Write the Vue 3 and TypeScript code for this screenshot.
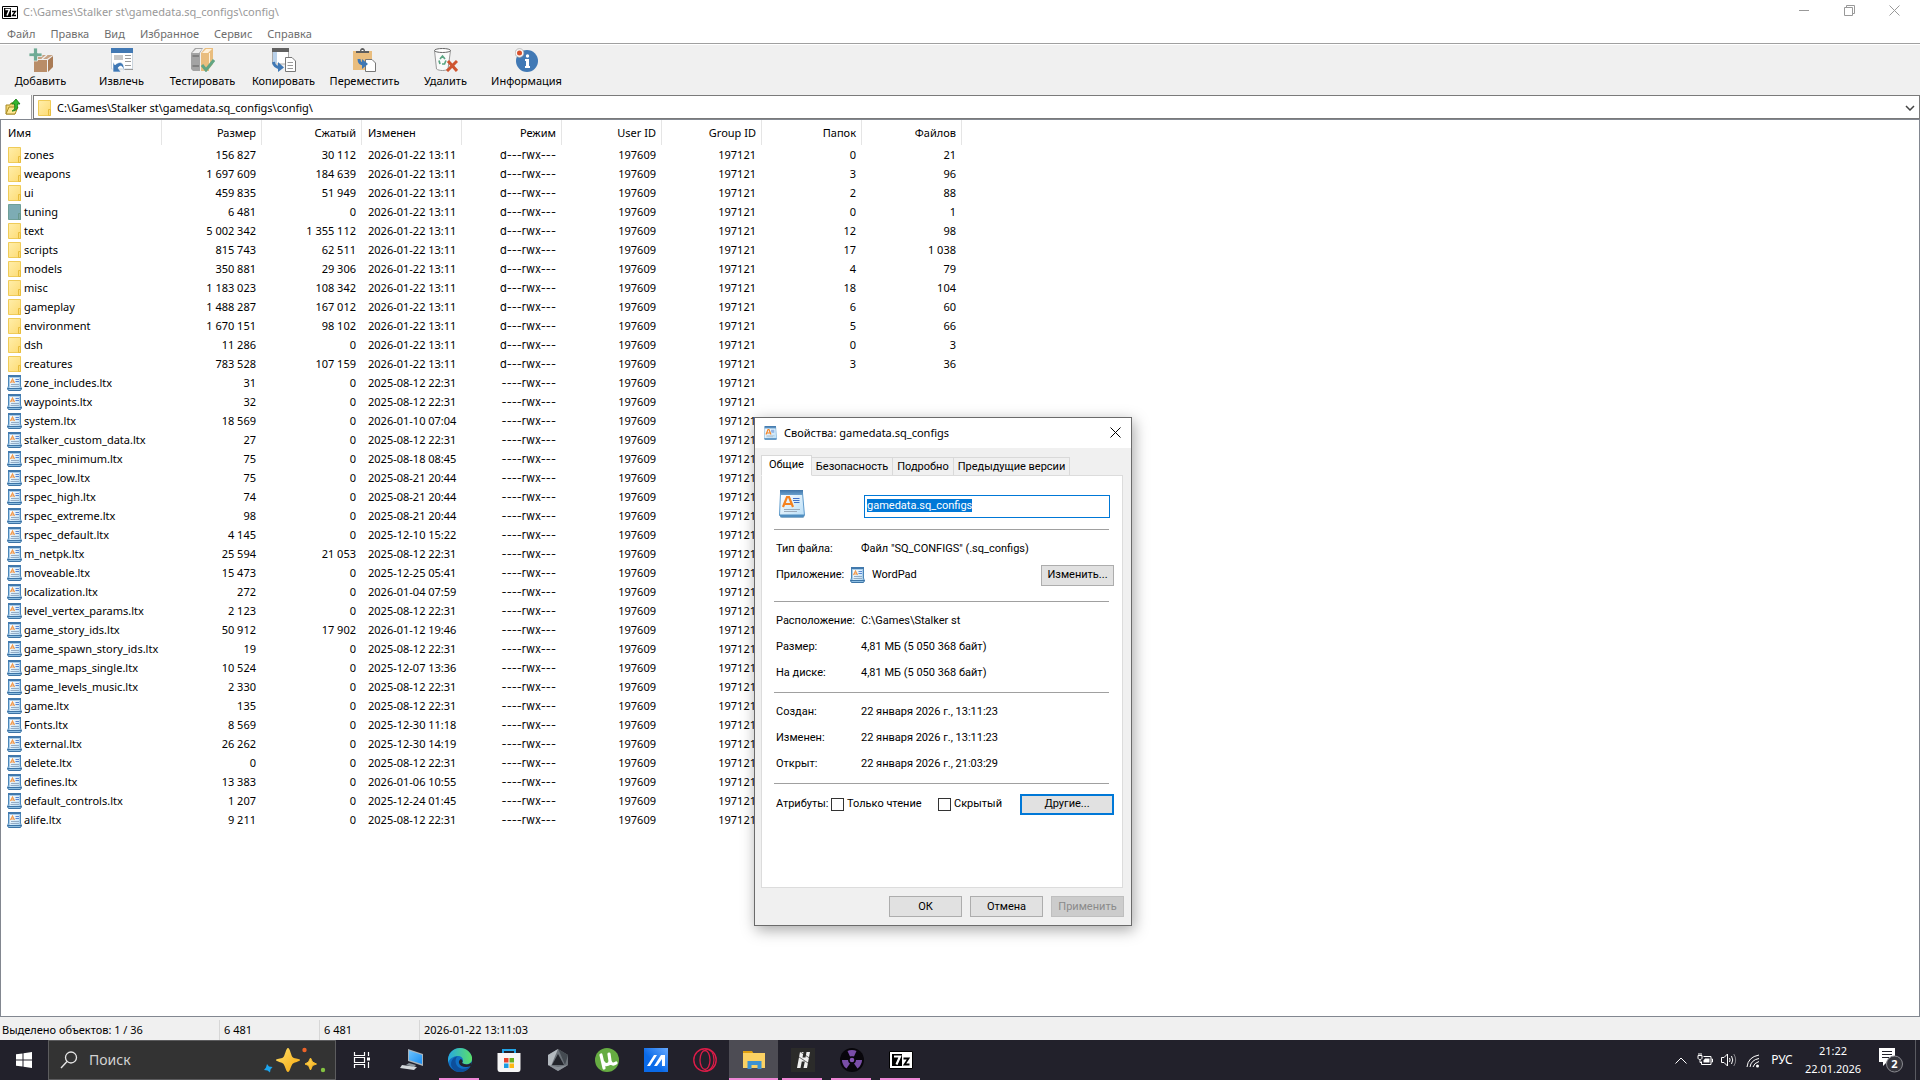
<script setup lang="ts">
import { onMounted, ref } from 'vue'

interface Entry {
  name: string
  size: string
  packed: string
  date: string
  folders?: string
  files?: string
}

const dir = (name: string, size: string, packed: string, folders: string, files: string): Entry => ({
  name, size, packed, folders, files, date: '2026-01-22 13:11',
})
const file = (name: string, size: string, date: string, packed = '0'): Entry => ({
  name: name + '.ltx', size, packed, date,
})

const entries: Entry[] = [
  dir('zones', '156 827', '30 112', '0', '21'),
  dir('weapons', '1 697 609', '184 639', '3', '96'),
  dir('ui', '459 835', '51 949', '2', '88'),
  dir('tuning', '6 481', '0', '0', '1'),
  dir('text', '5 002 342', '1 355 112', '12', '98'),
  dir('scripts', '815 743', '62 511', '17', '1 038'),
  dir('models', '350 881', '29 306', '4', '79'),
  dir('misc', '1 183 023', '108 342', '18', '104'),
  dir('gameplay', '1 488 287', '167 012', '6', '60'),
  dir('environment', '1 670 151', '98 102', '5', '66'),
  dir('dsh', '11 286', '0', '0', '3'),
  dir('creatures', '783 528', '107 159', '3', '36'),
  file('zone_includes', '31', '2025-08-12 22:31'),
  file('waypoints', '32', '2025-08-12 22:31'),
  file('system', '18 569', '2026-01-10 07:04'),
  file('stalker_custom_data', '27', '2025-08-12 22:31'),
  file('rspec_minimum', '75', '2025-08-18 08:45'),
  file('rspec_low', '75', '2025-08-21 20:44'),
  file('rspec_high', '74', '2025-08-21 20:44'),
  file('rspec_extreme', '98', '2025-08-21 20:44'),
  file('rspec_default', '4 145', '2025-12-10 15:22'),
  file('m_netpk', '25 594', '2025-08-12 22:31', '21 053'),
  file('moveable', '15 473', '2025-12-25 05:41'),
  file('localization', '272', '2026-01-04 07:59'),
  file('level_vertex_params', '2 123', '2025-08-12 22:31'),
  file('game_story_ids', '50 912', '2026-01-12 19:46', '17 902'),
  file('game_spawn_story_ids', '19', '2025-08-12 22:31'),
  file('game_maps_single', '10 524', '2025-12-07 13:36'),
  file('game_levels_music', '2 330', '2025-08-12 22:31'),
  file('game', '135', '2025-08-12 22:31'),
  file('Fonts', '8 569', '2025-12-30 11:18'),
  file('external', '26 262', '2025-12-30 14:19'),
  file('delete', '0', '2025-08-12 22:31'),
  file('defines', '13 383', '2026-01-06 10:55'),
  file('default_controls', '1 207', '2025-12-24 01:45'),
  file('alife', '9 211', '2025-08-12 22:31'),
]

const menu = ['Файл', 'Правка', 'Вид', 'Избранное', 'Сервис', 'Справка']
const tools = [
  { id: 'add', label: 'Добавить' },
  { id: 'extract', label: 'Извлечь' },
  { id: 'test', label: 'Тестировать' },
  { id: 'copy', label: 'Копировать' },
  { id: 'move', label: 'Переместить' },
  { id: 'delete', label: 'Удалить' },
  { id: 'info', label: 'Информация' },
]
const tabs = ['Общие', 'Безопасность', 'Подробно', 'Предыдущие версии']
const apps = [
  { id: 'taskview', title: 'Представление задач' },
  { id: 'pc', title: 'Компьютер' },
  { id: 'edge', title: 'Edge', running: true },
  { id: 'store', title: 'Store' },
  { id: 'armoury', title: 'Armoury Crate' },
  { id: 'utorrent', title: 'uTorrent' },
  { id: 'asus', title: 'MyASUS' },
  { id: 'opera', title: 'Opera GX' },
  { id: 'explorer', title: 'Проводник', running: true, active: true },
  { id: 'hx', title: 'H', running: true },
  { id: 'nuke', title: 'Stalker', running: true },
  { id: 'zip', title: '7-Zip', running: true },
]

const path = 'C:\\Games\\Stalker st\\gamedata.sq_configs\\config\\'
const fileName = ref('gamedata.sq_configs')
const nameInput = ref<HTMLInputElement | null>(null)

onMounted(() => {
  nameInput.value?.focus()
  nameInput.value?.select()
})
</script>

<template>
  <svg class="defs" width="0" height="0" aria-hidden="true">
    <defs>
      <linearGradient id="g-folder" x1="0" y1="0" x2="1" y2="1"><stop offset="0" stop-color="#ffeeaa" /><stop offset="1" stop-color="#fddb74" /></linearGradient>
      <linearGradient id="g-page" x1="0" y1="0" x2="1" y2="1"><stop offset="0" stop-color="#ffffff" /><stop offset="1" stop-color="#b9def7" /></linearGradient>
      <linearGradient id="g-top" x1="0" y1="0" x2="0" y2="1"><stop offset="0" stop-color="#3f74a8" /><stop offset="1" stop-color="#6aa0cd" /></linearGradient>
      <linearGradient id="g-edge" x1="0" y1="0" x2="1" y2="0"><stop offset="0" stop-color="#27a9e0" /><stop offset="1" stop-color="#5be06a" /></linearGradient>
      <linearGradient id="g-star" x1="0" y1="0" x2="1" y2="1"><stop offset="0" stop-color="#ffe06a" /><stop offset="1" stop-color="#f5a60c" /></linearGradient>
      <linearGradient id="g-asus" x1="0" y1="1" x2="1" y2="0"><stop offset="0.4" stop-color="#0a6ae8" /><stop offset="1" stop-color="#66a9ff" /></linearGradient>
      <linearGradient id="g-screen" x1="0" y1="0" x2="1" y2="1"><stop offset="0" stop-color="#6cc4ff" /><stop offset="1" stop-color="#1a8df0" /></linearGradient>
    </defs>
    <symbol id="i-folder" viewBox="0 0 16 18">
      <path d="M1.500 1.500H13.500V16.500H1.500Z" fill="url(#g-folder)" stroke="#efcb58" />
      <path d="M11.500 16.500V10.500H13.500V16.500Z" fill="#fbdc78" stroke="#e8bd3c" />
    </symbol>
    <symbol id="i-folder-sel" viewBox="0 0 16 18">
      <path d="M1.500 1.500H13.500V16.500H1.500Z" fill="#7dacb4" stroke="#6f9f98" />
      <path d="M11.500 16.500V10.500H13.500V16.500Z" fill="#7da8a6" stroke="#69998c" />
    </symbol>
    <symbol id="i-doc" viewBox="0 0 16 18">
      <path d="M1.500 1.500H13.500V12L14.500 15H.5L1.500 12Z" fill="#a9cdea" stroke="#4b86b8" />
      <path d="M3 4H12V14H3Z" fill="url(#g-page)" />
      <path d="M1 1H14V3H1Z" fill="#4179ad" />
      <path d="M.5 14.500H14.500L13.500 16.500H1.500Z" fill="#8fbfe2" stroke="#3c74a6" />
      <path d="M3.500 9L5.500 5L7.500 9M4.500 8H7" fill="none" stroke="#f39a4c" stroke-width="1.200" />
      <path d="M8.500 5.500H12M8.500 7.500H12" stroke="#5a86d2" />
      <path d="M4 10.500H12M3.500 12.500H12" stroke="#93abc4" />
    </symbol>
    <symbol id="i-doc-big" viewBox="0 0 26 30">
      <path d="M1 27L3 29H24L26 27Z" fill="#8a9aa8" opacity=".5" />
      <path d="M1.500 4H23.500L25.500 26.500H.5Z" fill="url(#g-page)" stroke="#5e9acb" />
      <path d="M1 1H24V6H1Z" fill="url(#g-top)" />
      <path d="M.5 25.500H25.500L24.500 28.500H1.500Z" fill="#4f8dc0" />
      <path d="M4 18L8 8H10L14 18M6 15H12" fill="none" stroke="#f58220" stroke-width="2.200" />
      <path d="M14 9.500H20.500M14 11.500H20.500M15 13.500H20.500" stroke="#3f70c8" />
      <path d="M5 20.500H21M5 22.500H18" stroke="#9aaabb" />
    </symbol>
    <symbol id="i-7z" viewBox="0 0 16 16">
      <path d="M.5 2.500H15.500V14.500H.5Z" fill="#fff" stroke="#000" />
      <path d="M2 4H9V13H2Z" fill="#000" />
      <path d="M3.300 5.500H7.500L5 11.500" fill="none" stroke="#fff" stroke-width="1.500" />
      <path d="M10 7.500H13.500L10.500 11.500H14" fill="none" stroke="#000" stroke-width="1.300" />
    </symbol>

    <symbol id="i-add" viewBox="0 0 24 24">
      <path d="M5 11L10 7H24L18 11Z" fill="#c6a283" /><path d="M5 12H18V24H5Z" fill="#b98d68" />
      <path d="M19 12L24 8V19L19 24Z" fill="#a97b55" /><path d="M13 11L18 7" stroke="#efefef" stroke-width="1.500" />
      <path d="M0 5H4.500V0H8.500V5H13V8.500H8.500V13H4.500V8.500H0Z" fill="#6fab95" stroke="#f0f0f0" stroke-width=".8" />
    </symbol>
    <symbol id="i-extract" viewBox="0 0 24 24">
      <path d="M1.500 1H22.500V21H1.500Z" fill="#fff" stroke="#c9d3dc" /><path d="M1 0H23V5H1Z" fill="#4279b4" />
      <path d="M4 7H13V12H4Z" fill="#c8c8c8" /><path d="M15 7.500H21M15 10.500H21M15 13.500H21M15 17.500H21M14 21.500H23" stroke="#999" />
      <path d="M14 24C15 13 9 13 5 17L3 14V24H11L8 20C10 17 13 17 14 24Z" fill="#3f78b5" stroke="#fff" stroke-width=".6" />
    </symbol>
    <symbol id="i-test" viewBox="0 0 24 24">
      <path d="M0 5L4 0H12L9 5V23H2L0 21Z" fill="#a3a3a3" /><path d="M1 5L5 1H11L8 5Z" fill="#eee" />
      <path d="M1.500 8H8M1.500 18H8" stroke="#777" stroke-width="1.500" />
      <path d="M10 5L14 0H22V16L18 21V23H10Z" fill="#e9bd7e" /><path d="M11 5L15 1H21L17 5Z" fill="#fff1da" /><path d="M18.500 5V19" stroke="#fff1da" />
      <path d="M11 17L15 22L23 12" fill="none" stroke="#62a584" stroke-width="3" />
    </symbol>
    <symbol id="i-copy" viewBox="0 0 24 24">
      <path d="M.5 1H16.500V16H.5Z" fill="#fff" stroke="#aaa" /><path d="M0 0H17V4H0Z" fill="#616161" /><path d="M1 4H5V15H1Z" fill="#b9d1ea" />
      <path d="M13.500 9.500H20L23.500 13V23.500H13.500Z" fill="#fff" stroke="#777" />
      <path d="M15.500 14.500H21M15.500 17.500H21M15.500 20.500H21" stroke="#999" />
      <path d="M1.500 14C2 18 4 19.500 9 19.500" fill="none" stroke="#3f78b5" stroke-width="3" /><path d="M6 14L12 19.500L6 24Z" fill="#3f78b5" />
    </symbol>
    <symbol id="i-move" viewBox="0 0 24 24">
      <path d="M0 3H19V22H0Z" fill="#e9bd7e" /><path d="M3 5V3H7C7 -1 12 -1 12 3H16V5Z" fill="#5d5d5d" /><path d="M8.500 2.500H10.500" stroke="#fff" />
      <path d="M12.500 11.500H19L22.500 15V23.500H12.500Z" fill="#fff" stroke="#777" />
      <path d="M6 11C6 15 8 16 11 16" fill="none" stroke="#3f78b5" stroke-width="3" /><path d="M9 11L15 16L9 21Z" fill="#3f78b5" />
    </symbol>
    <symbol id="i-delete" viewBox="0 0 24 24">
      <path d="M.5 2.500L2.500 21C5 23 12 23 14 21L16.500 2.500" fill="#fafafa" stroke="#999" /><ellipse cx="8.500" cy="2.500" rx="8" ry="2" fill="#fff" stroke="#666" />
      <path d="M6 11L8.500 8L11 11M12 12.500L10.500 16H8M5 12.500L6 16" fill="none" stroke="#5aa583" stroke-width="1.700" />
      <path d="M14 13L23 23M23 13L13 23" stroke="#cf5530" stroke-width="3" />
    </symbol>
    <symbol id="i-info" viewBox="0 0 24 24">
      <circle cx="12" cy="13" r="11" fill="#4179b5" /><path d="M10 11H14V18H15V20H10V18H11V13H10Z" fill="#fff" /><circle cx="12.500" cy="8" r="1.700" fill="#fff" />
      <circle cx="4.500" cy="5" r="4.400" fill="#f8f8f8" stroke="#999" stroke-width=".6" /><circle cx="4.500" cy="5" r="2.500" fill="#d7502c" />
    </symbol>

    <symbol id="t-taskview" viewBox="0 0 24 24">
      <path d="M4.500 4V7.500H14.500V4M4.500 20V16.500H14.500V20M4.500 9.500H14.500V14.500H4.500ZM18.500 4V8M18.500 14V20" fill="none" stroke="#fff" stroke-width="1.200" /><path d="M17 9.500H20V12.500H17Z" fill="#fff" />
    </symbol>
    <symbol id="t-pc" viewBox="0 0 24 24">
      <path d="M9 1L24 6V18L9 13Z" fill="#a9b4bc" /><path d="M10 2.500L23 7V16L10 12Z" fill="url(#g-screen)" />
      <path d="M10 15L17 17L15 19L7 17Z" fill="#8d979e" /><path d="M3 17L18 19L15 22L1 20Z" fill="#d3d8db" />
    </symbol>
    <symbol id="t-edge" viewBox="0 0 24 24">
      <circle cx="12" cy="12" r="12" fill="#1170c4" />
      <path d="M0 11C1 4 6 0 12 0C20 0 25 7 24 12C23 17 17 17 14 15C16 13 15 8 10 8C5 8 1 11 0 15Z" fill="url(#g-edge)" />
      <path d="M10 8C6 11 7 18 12 20C16 22 20 20 23 18C19 24 11 26 6 22C0 17 4 9 10 8Z" fill="#0d4f9b" />
      <path d="M14 15C17 17 22 17 23.500 14L23 18C18 20 12 19 11 15C10.500 12 13 11 13 11C15 12 15 14 14 15Z" fill="#23222c" />
    </symbol>
    <symbol id="t-store" viewBox="0 0 24 24">
      <path d="M6 6V2H18V6" fill="none" stroke="#21a3e6" stroke-width="2" /><path d="M0.500 5H23.500V21Q23.500 24 21 24H3Q.5 24 .5 21Z" fill="#f6f6f6" />
      <path d="M7 10H11.500V14.500H7Z" fill="#e8442e" /><path d="M12.500 10H17V14.500H12.500Z" fill="#6ab020" /><path d="M7 15.500H11.500V20H7Z" fill="#1b9de2" /><path d="M12.500 15.500H17V20H12.500Z" fill="#fdb813" />
    </symbol>
    <symbol id="t-armoury" viewBox="0 0 24 24">
      <path d="M12 1L22 7V17L12 23L2 17V7Z" fill="#6b7178" /><path d="M12 1L2 7V17L5 18Z" fill="#b3b9bf" /><path d="M12 1L22 7L19 17L14 5Z" fill="#444a51" />
      <path d="M12 6L18 17H6Z" fill="#22242b" /><path d="M2 17L12 23L22 17L12 19Z" fill="#8b9198" />
    </symbol>
    <symbol id="t-utorrent" viewBox="0 0 24 24">
      <circle cx="12" cy="12" r="12" fill="#66ac42" />
      <path d="M6 7L9 20M8 14C10 18 15 17 15 13L14 6M15 13C16 16 18 17 21 15" fill="none" stroke="#fff" stroke-width="3.200" stroke-linecap="round" />
    </symbol>
    <symbol id="t-asus" viewBox="0 0 24 24">
      <path d="M0 0H24V24H0Z" fill="url(#g-asus)" /><path d="M3 18L10 7H13L6 18ZM10 18L17 7H21V18H18V11L13 18Z" fill="#fff" />
    </symbol>
    <symbol id="t-opera" viewBox="0 0 24 24">
      <circle cx="12" cy="12" r="11.200" fill="none" stroke="#dc1c48" stroke-width="1.400" />
      <ellipse cx="12" cy="12" rx="5" ry="9.500" fill="none" stroke="#dc1c48" stroke-width="1.300" />
      <path d="M12 1C19 1 21 7 21 12S18 23 12 23" fill="none" stroke="#dc1c48" stroke-width="1.200" />
    </symbol>
    <symbol id="t-explorer" viewBox="0 0 24 24">
      <path d="M1 3H10L12 6H1Z" fill="#e0a010" /><path d="M1 5H23V20H1Z" fill="#fbd163" /><path d="M5.500 21V13H19.500V21H15.500V17H9.500V21Z" fill="#3d92d2" />
    </symbol>
    <symbol id="t-hx" viewBox="0 0 24 24">
      <path d="M0 0H24V24H0Z" fill="#2b2b2a" /><path d="M6 20L9 4H12.500L11.500 9.500H14.500L15.500 4H19L16 20H12.500L13.800 13.500H10.800L9.500 20Z" fill="#f0f0f0" /><path d="M5 7L20 17M8 3L20 11" stroke="#2b2b2a" stroke-width=".7" />
    </symbol>
    <symbol id="t-nuke" viewBox="0 0 24 24">
      <circle cx="12" cy="12" r="12" fill="#08060b" /><circle cx="12" cy="12" r="2.300" fill="#8455b2" />
      <path d="M10 8.500L7.500 3C10 1.500 14 1.500 16.500 3L14 8.500C13 8 11 8 10 8.500ZM8 12L2 12C2 15 4 19 6.500 20.500L10 15.500C9 15 8 13.500 8 12ZM16 12L22 12C22 15 20 19 17.500 20.500L14 15.500C15 15 16 13.500 16 12Z" fill="#7a4ea8" />
    </symbol>
    <symbol id="t-zip" viewBox="0 0 24 24">
      <path d="M.5 3.500H23.500V20.500H.5Z" fill="#fff" stroke="#000" /><path d="M3 6H13V18H3Z" fill="#000" />
      <path d="M5 8.500H11L7.500 16.500" fill="none" stroke="#fff" stroke-width="2.200" /><path d="M14.500 10.500H19.500L15.500 16.500H20.500" fill="none" stroke="#000" stroke-width="1.800" />
    </symbol>
  </svg>

  <div class="desktop">
    <main class="window">
      <header class="titlebar">
        <svg class="app-icon"><use href="#i-7z" /></svg>
        <span class="title">{{ path }}</span>
        <div class="win-controls">
          <button aria-label="Свернуть"><svg viewBox="0 0 11 11"><path d="M0 5.500H10" /></svg></button>
          <button aria-label="Восстановить"><svg viewBox="0 0 11 11"><path d="M.5 2.500H8.500V10.500H.5ZM2.500 2.500V.5H10.500V8.500H8.500" /></svg></button>
          <button aria-label="Закрыть"><svg viewBox="0 0 11 11"><path d="M.5 .5L10.500 10.500M10.500 .5L.5 10.500" /></svg></button>
        </div>
      </header>
      <nav class="menu"><button v-for="m in menu" :key="m">{{ m }}</button></nav>
      <div class="toolbar">
        <button v-for="t in tools" :key="t.id"><svg><use :href="'#i-' + t.id" /></svg>{{ t.label }}</button>
      </div>
      <div class="address">
        <button class="up" aria-label="Вверх">
          <svg viewBox="0 0 16 18">
            <path d="M1 7H5L6 5H10V16H1Z" fill="#f3d774" stroke="#a88a24" /><path d="M1 16L4 9H13L10 16Z" fill="#ffe894" stroke="#a88a24" />
            <path d="M7 13C10 12 10 9 9.500 6H6.500L11 1L15 6H12.500C13 10 12 13 7 13Z" fill="#35b52e" stroke="#12730f" stroke-width=".8" />
          </svg>
        </button>
        <div class="path-box">
          <svg><use href="#i-folder" /></svg>
          <input type="text" aria-label="Адрес" :value="path" />
          <button class="drop" aria-label="Список"><svg viewBox="0 0 10 6"><path d="M1 1L5 5L9 1" fill="none" stroke="#444" stroke-width="1.500" /></svg></button>
        </div>
      </div>

      <div class="list">
        <table>
          <colgroup><col class="c-name" /><col v-for="n in 8" :key="n" class="c-num" /></colgroup>
          <thead>
            <tr>
              <th class="left">Имя</th><th>Размер</th><th>Сжатый</th><th class="left">Изменен</th><th>Режим</th>
              <th>User ID</th><th>Group ID</th><th>Папок</th><th>Файлов</th>
            </tr>
          </thead>
          <tbody>
            <tr v-for="e in entries" :key="e.name">
              <td class="left">
                <span class="name">
                  <svg><use :href="e.name === 'tuning' ? '#i-folder-sel' : e.files ? '#i-folder' : '#i-doc'" /></svg>{{ e.name }}
                </span>
              </td>
              <td>{{ e.size }}</td><td>{{ e.packed }}</td><td class="left">{{ e.date }}</td>
              <td class="mode">{{ e.files ? 'd---rwx---' : '----rwx---' }}</td>
              <td>197609</td><td>197121</td><td>{{ e.folders }}</td><td>{{ e.files }}</td>
            </tr>
          </tbody>
        </table>
      </div>

      <footer class="status">
        <span class="selected">Выделено объектов: 1 / 36</span><span class="cell">6 481</span><span class="cell">6 481</span><span>2026-01-22 13:11:03</span>
      </footer>
    </main>

    <div class="taskbar">
      <button class="start" aria-label="Пуск">
        <svg viewBox="0 0 16 16"><path d="M0 2.300L6.500 1.400V7.500H0ZM7.500 1.200L16 0V7.500H7.500ZM0 8.500H6.500V14.600L0 13.700ZM7.500 8.500H16V16L7.500 14.800Z" fill="#fff" /></svg>
      </button>
      <label class="search">
        <svg class="lens" viewBox="0 0 18 18"><circle cx="11" cy="6.500" r="5.500" fill="none" stroke="#e6e6e6" stroke-width="1.300" /><path d="M7 10.500L1 17" stroke="#e6e6e6" stroke-width="1.400" /></svg>
        <input type="text" placeholder="Поиск" aria-label="Поиск" />
        <svg class="sparkles" viewBox="0 0 62 26">
          <path d="M24 1C26 1 27 9 29 10.500C31 12 36 11.500 36 13S31 15 29 16.500C27 18 26 25 24 25S21 18 19 16.500C17 15 12 14.500 12 13S17 12 19 10.500C21 9 22 1 24 1Z" fill="url(#g-star)" />
          <path d="M46.500 11L48.500 15L52.500 17L48.500 18.500L46.500 23L44.500 18.500L41 17L44.500 15Z" fill="url(#g-star)" stroke="#f9bd2c" stroke-linejoin="round" />
          <path d="M3 17L5 19.500L8.500 20L6.500 22.500L6 25.500L3.500 23.500L0 23L2 20.500Z" fill="#1ca5ee" />
          <circle cx="40.500" cy="3" r="2.200" fill="#ee6328" /><circle cx="59" cy="23" r="2.200" fill="#84c341" />
        </svg>
      </label>
      <div class="apps">
        <button v-for="a in apps" :key="a.id" :class="{ running: a.running, active: a.active }" :aria-label="a.title"><svg><use :href="'#t-' + a.id" /></svg></button>
      </div>
      <div class="tray">
        <button aria-label="Скрытые значки"><svg class="chev" viewBox="0 0 12 7"><path d="M.5 6.500L6 1L11.500 6.500" /></svg></button>
        <button aria-label="Батарея"><svg class="glyph" viewBox="0 0 16 16"><path d="M6.500 4.500H14V12.500H4.500V9.500M14.500 7H15.500V10H14.500M1 3.500H5V6C5 8 1 8 1 6ZM2 1V3M4 1V3M3 7.500V10.500H5" /><path d="M8 6.500H12.500V10.500H6.500V8.500Z" fill="#fff" stroke="none" /></svg></button>
        <button aria-label="Громкость"><svg class="glyph" viewBox="0 0 16 16"><path d="M.5 5.500H3L6.500 2V14L3 10.500H.5ZM8.500 6Q9.700 8 8.500 10M10.500 4Q13 8 10.500 12" /><path d="M12.800 2Q16.500 8 12.800 14" opacity=".45" /></svg></button>
        <button aria-label="Сеть"><svg class="glyph" viewBox="0 0 16 16"><path d="M2 15Q3 5 14 3M5 15Q6 8 14 6.500M8 15Q9 11 14 9.500" /><circle cx="12.500" cy="14" r="1.500" fill="#fff" stroke="none" /></svg></button>
        <button class="lang">РУС</button>
        <button class="clock"><span>21:22</span><span>22.01.2026</span></button>
        <button class="notes" aria-label="Уведомления: 2">
          <svg viewBox="0 0 26 26"><path d="M0 1H16V15H8L4 19V15H0Z" fill="#fff" /><path d="M3 4.500H13M3 7.500H13M3 10.500H10" stroke="#22222b" /><circle cx="15.500" cy="17" r="8" fill="#35353c" stroke="#8b8b91" /><text x="15.500" y="21" text-anchor="middle" class="badge">2</text></svg>
        </button>
      </div>
    </div>

    <section class="dialog" role="dialog" aria-labelledby="dlg-title">
      <header class="dlg-head">
        <svg class="dlg-icon"><use href="#i-doc-big" /></svg>
        <h1 id="dlg-title">Свойства: gamedata.sq_configs</h1>
        <button class="dlg-close" aria-label="Закрыть"><svg viewBox="0 0 11 11"><path d="M.5 .5L10.500 10.500M10.500 .5L.5 10.500" /></svg></button>
      </header>
      <div class="tabs" role="tablist">
        <button v-for="(t, i) in tabs" :key="t" role="tab" :aria-selected="i === 0" :class="{ on: i === 0 }">{{ t }}</button>
      </div>
      <div class="pane">
        <div class="name-row">
          <svg><use href="#i-doc-big" /></svg>
          <input ref="nameInput" v-model="fileName" type="text" aria-label="Имя файла" />
        </div>
        <hr />
        <div class="group type-group">
          <div class="row"><span class="key">Тип файла:</span><span>Файл "SQ_CONFIGS" (.sq_configs)</span></div>
          <div class="row app-row"><span class="key short">Приложение:</span><svg><use href="#i-doc" /></svg><span class="app-name">WordPad</span><button class="btn">Изменить...</button></div>
        </div>
        <hr />
        <div class="group">
          <div class="row"><span class="key">Расположение:</span><span>C:\Games\Stalker st</span></div>
          <div class="row"><span class="key">Размер:</span><span>4,81 МБ (5 050 368 байт)</span></div>
          <div class="row"><span class="key">На диске:</span><span>4,81 МБ (5 050 368 байт)</span></div>
        </div>
        <hr />
        <div class="group">
          <div class="row"><span class="key">Создан:</span><span>22 января 2026 г., 13:11:23</span></div>
          <div class="row"><span class="key">Изменен:</span><span>22 января 2026 г., 13:11:23</span></div>
          <div class="row"><span class="key">Открыт:</span><span>22 января 2026 г., 21:03:29</span></div>
        </div>
        <hr />
        <div class="attrs">
          <span class="attr-key">Атрибуты:</span>
          <label class="readonly"><input type="checkbox" />Только чтение</label>
          <label><input type="checkbox" />Скрытый</label>
          <button class="btn primary">Другие...</button>
        </div>
      </div>
      <footer class="dlg-foot">
        <button class="btn">ОК</button><button class="btn">Отмена</button><button class="btn" disabled>Применить</button>
      </footer>
    </section>
  </div>
</template>

<style>
body {
  margin: 0;
}
</style>

<style scoped>
* {
  box-sizing: border-box;
}
.defs {
  position: absolute;
}
button {
  margin: 0;
  padding: 0;
  border: 0;
  background: none;
  font: inherit;
  color: inherit;
}
input[type='text'] {
  min-width: 0;
  border: 0;
  padding: 0;
  background: none;
  outline: none;
  font: inherit;
  color: inherit;
}
.desktop {
  position: relative;
  display: flex;
  flex-direction: column;
  min-height: 100vh;
  font: 11px/16px 'Noto Sans', sans-serif;
  color: #000;
}
.window {
  flex: 1;
  display: flex;
  flex-direction: column;
  background: #f0f0f0;
}
.titlebar {
  display: flex;
  align-items: center;
  height: 24px;
  padding-left: 2px;
  background: #fff;
  color: #999;
}
.app-icon {
  width: 16px;
  height: 16px;
  margin-right: 5px;
}
.win-controls {
  display: flex;
  align-self: flex-start;
  margin-left: auto;
  margin-right: 3px;
}
.win-controls button {
  display: flex;
  align-items: center;
  justify-content: center;
  width: 45px;
  height: 20px;
}
.win-controls svg,
.dlg-close svg {
  width: 11px;
  height: 11px;
  fill: none;
  stroke: #999;
}
.menu {
  display: flex;
  gap: 1px;
  height: 19px;
  background: #fff;
  color: #6d6d6d;
}
.menu button {
  padding: 0 7px;
}
.toolbar {
  display: flex;
  height: 52px;
  padding-top: 4px;
  border-top: 1px solid #a0a0a0;
  box-shadow: inset 0 1px #fff;
}
.toolbar button {
  display: flex;
  flex-direction: column;
  align-items: center;
  width: 81px;
  gap: 1px;
}
.toolbar svg {
  width: 24px;
  height: 24px;
}
.address {
  display: flex;
  height: 24px;
  background: #f0f0f0;
}
.up {
  width: 32px;
  margin-right: 1px;
  padding-left: 5px;
  background: #fff;
  border-right: 1px solid #a0a0a0;
  text-align: left;
}
.up svg {
  display: block;
  width: 16px;
  height: 18px;
}
.path-box {
  flex: 1;
  display: flex;
  align-items: center;
  padding-top: 1px;
  background: #fff;
  border: 1px solid #7a7a7a;
}
.path-box > svg {
  width: 16px;
  height: 18px;
  margin: 0 4px 0 3px;
}
.path-box input {
  flex: 1;
}
.drop {
  width: 18px;
}
.drop svg {
  display: block;
  width: 10px;
  height: 6px;
  margin: 0 auto;
}
.list {
  flex: 1;
  background: #fff;
  border: 1px solid #828790;
}
table {
  width: 961px;
  table-layout: fixed;
  border-collapse: separate;
  border-spacing: 0;
}
.c-name {
  width: 161px;
}
.c-num {
  width: 100px;
}
th,
td {
  padding: 0 6px;
  font-weight: 400;
  text-align: right;
  white-space: nowrap;
}
th {
  height: 25px;
  border-right: 1px solid #e5e5e5;
  padding-right: 5px;
}
th:first-child {
  padding-left: 7px;
}
td {
  height: 19px;
}
.left {
  text-align: left;
}
.mode {
  font-family: Inter, sans-serif;
}
.name {
  display: flex;
  align-items: center;
  gap: 1px;
}
.name svg {
  flex: none;
  width: 16px;
  height: 18px;
}
.status {
  display: flex;
  align-items: center;
  height: 23px;
  padding: 2px 0 0 2px;
}
.selected {
  width: 218px;
  border-right: 1px solid #d7d7d7;
}
.cell {
  width: 100px;
  padding-left: 4px;
  border-right: 1px solid #d7d7d7;
}
.status span:last-child {
  padding-left: 4px;
}
.status span {
  line-height: 20px;
}

.taskbar {
  display: flex;
  height: 40px;
  background: #22212b;
  color: #fff;
}
.start {
  width: 48px;
}
.start svg {
  display: block;
  width: 16px;
  height: 16px;
  margin: 0 auto;
}
.search {
  display: flex;
  align-items: center;
  width: 288px;
  padding: 0 9px 0 11px;
  background: #333333;
  border: 1px solid #5c5c5e;
}
.lens {
  width: 18px;
  height: 18px;
  margin-right: 11px;
}
.search input {
  flex: 1;
  font-size: 14px;
}
.search input::placeholder {
  color: #d2d2d2;
  opacity: 1;
}
.sparkles {
  width: 62px;
  height: 26px;
}
.apps {
  display: flex;
  padding-left: 1px;
}
.apps button {
  position: relative;
  display: flex;
  align-items: center;
  justify-content: center;
  width: 49px;
}
.apps svg {
  width: 24px;
  height: 24px;
}
.running::after {
  content: '';
  position: absolute;
  left: 4px;
  right: 5px;
  bottom: 0;
  height: 2px;
  background: #ee86d6;
}
.apps .active {
  background: #4d4c54;
}
.active::after {
  left: 0;
  right: 0;
}
.tray {
  display: flex;
  align-items: center;
  margin-left: auto;
  margin-right: 4px;
  padding-right: 10px;
  height: 40px;
  border-right: 1px solid #5a5a61;
}
.tray svg {
  display: block;
  margin: 0 auto;
  fill: none;
  stroke: #fff;
}
.tray button {
  width: 24px;
}
.chev {
  width: 12px;
  height: 7px;
}
.glyph {
  width: 16px;
  height: 16px;
}
.tray .lang {
  width: 34px;
  font-size: 12px;
}
.tray .clock {
  display: flex;
  flex-direction: column;
  align-items: center;
  width: 68px;
  line-height: 18px;
}
.tray .notes {
  width: 26px;
  margin-left: 12px;
}
.notes svg {
  width: 26px;
  height: 26px;
  stroke: none;
}
.badge {
  fill: #fff;
  font-size: 11px;
  font-weight: 700;
}

.dialog {
  position: absolute;
  left: 754px;
  top: 417px;
  display: flex;
  flex-direction: column;
  width: 378px;
  background: #f0f0f0;
  border: 1px solid #6b6b6b;
  box-shadow: 2px 4px 14px rgba(0, 0, 0, 0.35);
  font: 11px/14px Roboto, sans-serif;
}
.dlg-head {
  display: flex;
  align-items: center;
  height: 30px;
  padding: 0 10px 0 9px;
  background: #fff;
}
.dlg-icon {
  width: 13px;
  height: 16px;
  margin-right: 7px;
}
h1 {
  margin: 0;
  font: 11px/16px 'Noto Sans', sans-serif;
}
.dlg-close {
  margin-left: auto;
  padding-bottom: 2px;
}
.dlg-close svg {
  display: block;
  stroke: #000;
}
.tabs {
  display: flex;
  align-items: flex-end;
  height: 28px;
  margin-bottom: -1px;
  padding: 0 6px;
}
.tabs button {
  height: 19px;
  padding: 1px 4px 0;
  border: 1px solid #d9d9d9;
  border-left: 0;
}
.tabs .on {
  position: relative;
  height: 21px;
  padding: 0 7px 1px;
  background: #fff;
  border-left: 1px solid #d9d9d9;
  border-bottom-color: #fff;
}
.pane {
  height: 413px;
  margin: 0 8px 0 6px;
  padding: 0 8px 0 12px;
  background: #fff;
  border: 1px solid #dcdcdc;
}
.name-row {
  display: flex;
  align-items: center;
  height: 53px;
  padding: 8px 4px 0 5px;
}
.name-row svg {
  width: 26px;
  height: 30px;
  margin-bottom: 6px;
}
.name-row input {
  flex: 1;
  height: 23px;
  margin-left: 59px;
  padding: 0 2px 2px;
  border: 1px solid #0078d7;
}
.name-row input::selection {
  background: #0078d7;
  color: #fff;
}
hr {
  height: 1px;
  margin: 0 5px 0 0;
  border: 0;
  background: #a0a0a0;
}
.group {
  padding: 6px 0;
}
.type-group {
  padding-bottom: 13px;
}
.row {
  display: flex;
  align-items: center;
  height: 26px;
  padding-left: 2px;
}
.key {
  width: 85px;
}
.app-row svg {
  width: 16px;
  height: 18px;
  margin: 0 6px 0 0;
}
.short {
  width: 74px;
}
.btn {
  width: 73px;
  height: 21px;
  background: #e1e1e1;
  border: 1px solid #adadad;
}
.app-row .btn {
  margin-left: auto;
}
.attrs {
  display: flex;
  align-items: center;
  height: 40px;
  padding-left: 2px;
}
.attr-key {
  width: 55px;
}
.attrs label {
  display: flex;
  align-items: center;
}
.readonly {
  width: 107px;
}
.attrs input {
  appearance: none;
  width: 13px;
  height: 13px;
  margin: 0 3px 0 0;
  border: 1px solid #333;
  background: #fff;
}
.attrs .primary {
  width: 94px;
  margin-left: auto;
  border: 2px solid #0078d7;
}
.dlg-foot {
  display: flex;
  justify-content: flex-end;
  gap: 8px;
  padding: 8px 7px;
}
.btn:disabled {
  background: #cccccc;
  border-color: #bfbfbf;
  color: #8a8a8a;
}
</style>
